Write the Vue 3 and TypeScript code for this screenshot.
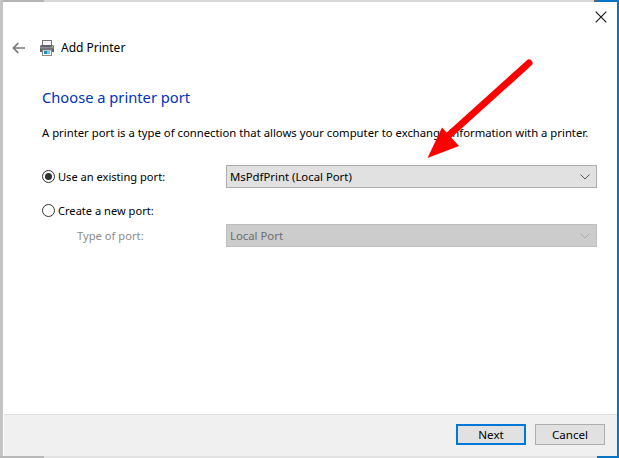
<script setup lang="ts">
const title: string = 'Add Printer'
</script>

<template>
  <div class="desk">
    <div class="top-strip"><span class="s1"></span><span class="s2"></span><span class="s3"></span><span class="s4"></span></div>
    <div class="left-strip"></div>
    <div class="right-strip"></div>
    <div class="bottom-strip"><span class="b1"></span><span class="b2">Now Need to Be Installed Or You're Unable to Install</span><span class="b3"></span></div>

    <div class="dialog">
      <button class="close" aria-label="Close">
        <svg width="12" height="12" viewBox="0 0 12 12"><path d="M.7.7l10.6 10.6M11.3.7L.7 11.3" stroke="#111" stroke-width="1.1" fill="none"/></svg>
      </button>
      <main class="main">
        <header class="head">
          <svg class="back" width="14" height="12" viewBox="0 0 14 12"><path d="M6.3 1L1.4 6l4.9 5M1.6 6H13" stroke="#7a7a7a" stroke-width="1.7" fill="none"/></svg>
          <svg class="printer" width="16" height="16" viewBox="0 0 16 16">
            <rect x="3.5" y=".5" width="9" height="6" fill="#f4f4f4" stroke="#777"/>
            <path d="M1 6.5Q1 5 2.5 5h11Q15 5 15 6.500V12H1z" fill="#5f6368"/>
            <rect x="1" y="7" width="14" height="1.500" fill="#8a8e92"/>
            <rect x="12.500" y="6" width="1.500" height="1" fill="#7fd07f"/>
            <rect x="3.500" y="10" width="9" height="5.500" fill="#fff" stroke="#8a8a8a"/>
            <rect x="5" y="11" width="3" height="3" fill="#1b8fc9"/>
            <rect x="8" y="11" width="3" height="3" fill="#7bc4e4"/>
          </svg>
          <span class="title">{{ title }}</span>
        </header>
        <h1 class="heading">Choose a printer port</h1>
        <p class="desc">A printer port is a type of connection that allows your computer to exchange information with a printer.</p>
        <div class="form">
          <label class="opt"><span class="radio on"></span>Use an existing port:</label>
          <div class="select"><span>MsPdfPrint (Local Port)</span>
            <svg width="10" height="6" viewBox="0 0 10 6"><path d="M.5.5L5 5 9.500.5" stroke="#555" stroke-width="1" fill="none"/></svg>
          </div>
          <label class="opt second"><span class="radio"></span>Create a new port:</label>
          <label class="sub">Type of port:</label>
          <div class="select off"><span>Local Port</span>
            <svg width="10" height="6" viewBox="0 0 10 6"><path d="M.5.5L5 5 9.500.5" stroke="#ababab" stroke-width="1" fill="none"/></svg>
          </div>
        </div>
      </main>
      <footer class="foot">
        <button class="btn primary">Next</button>
        <button class="btn">Cancel</button>
      </footer>
    </div>

    <svg class="arrow" width="619" height="458" viewBox="0 0 619 458">
      <path d="M529 63L448 136" stroke="#fe0000" stroke-width="7" stroke-linecap="round" fill="none"/>
      <path d="M427.500 158L442 127.500L459 146z" fill="#fe0000"/>
    </svg>
  </div>
</template>

<style>
html, body { margin: 0; background: #fff; }
</style>

<style scoped>
.desk { position: relative; width: 619px; height: 458px; overflow: hidden; background: #fff; font-family: "Noto Sans", "Open Sans", sans-serif; font-size: 12px; color: #000; }
.top-strip { position: absolute; left: 0; right: 0; top: 0; height: 2px; display: flex; }
.s1 { width: 44px; background: #b4b4b4; }
.s2 { width: 550px; background: #d9d9d9; }
.s3 { width: 3px; background: #5b6670; }
.s4 { flex: 1; background: #0a74c4; }
.left-strip { position: absolute; left: 0; top: 0; bottom: 0; width: 3px; background: #c4c4c4; }
.right-strip { position: absolute; right: 0; top: 0; bottom: 0; width: 2px; background: #0a74c4; }
.bottom-strip { position: absolute; left: 0; right: 0; top: 456px; height: 2px; display: flex; overflow: hidden; background: #e2e2e2; }
.b1 { width: 44px; background: #b8b8b8; flex: none; }
.b2 { width: 553px; flex: none; padding-left: 24px; box-sizing: border-box; font-size: 13px; line-height: 16px; color: #444; white-space: nowrap; letter-spacing: .2px; }
.b3 { flex: 1; background: #0a74c4; }
.dialog { position: absolute; left: 3px; top: 2px; width: 614px; height: 454px; box-sizing: border-box; background: #fff; display: flex; flex-direction: column; }
.close { position: absolute; top: 9px; right: 10px; width: 12px; height: 12px; padding: 0; border: 0; background: none; display: flex; }
.main { flex: 1; padding: 0 20px 0 9px; display: flex; flex-direction: column; }
.head { display: flex; align-items: center; height: 20px; margin-top: 36px; }
.back { margin-right: 14px; margin-left: 0; }
.printer { margin-right: 6px; margin-left: -1px; }
.title { font-size: 12px; line-height: 20px; }
.heading { margin: 27px 0 0 30px; font-size: 14.700px; line-height: 24px; font-weight: 400; color: #0033bc; }
.desc { margin: 16px 0 0 30px; font-size: 11.300px; line-height: 16px; white-space: nowrap; }
.form { margin: 24px 0 0 31px; display: grid; grid-template-columns: 183px 371px; align-items: center; }
.opt { display: flex; align-items: center; height: 23px; font-size: 11.100px; }
.second { grid-column: 1 / 3; height: 23px; margin-top: 11px; margin-bottom: 2px; }
.sub { padding-left: 34px; color: #8c8c8c; font-size: 11.200px; }
.radio { width: 11px; height: 11px; border: 1px solid #333; border-radius: 50%; margin-right: 3px; box-sizing: content-box; flex: none; background: #fff; position: relative; margin-left: -1px; }
.radio.on::after { content: ""; position: absolute; inset: 2px; border-radius: 50%; background: #333; }
.select { height: 23px; box-sizing: border-box; display: flex; align-items: center; justify-content: space-between; padding: 0 6px 0 3px; background: #e1e1e1; border: 1px solid #adadad; font-size: 11.350px; }
.select.off { background: #ccc; border-color: #bfbfbf; color: #6d6d6d; }
.foot { height: 42px; flex: none; box-sizing: border-box; background: #f0f0f0; border-top: 1px solid #dfdfdf; margin-left: 1px; display: flex; justify-content: flex-end; align-items: flex-start; gap: 9px; padding: 9px 12px 0 0; }
.btn { width: 70px; height: 21px; box-sizing: border-box; background: #e1e1e1; border: 1px solid #adadad; font: inherit; font-size: 11.600px; color: #000; padding: 0; }
.primary { border: 2px solid #0078d7; }
.arrow { position: absolute; left: 0; top: 0; pointer-events: none; }
</style>
